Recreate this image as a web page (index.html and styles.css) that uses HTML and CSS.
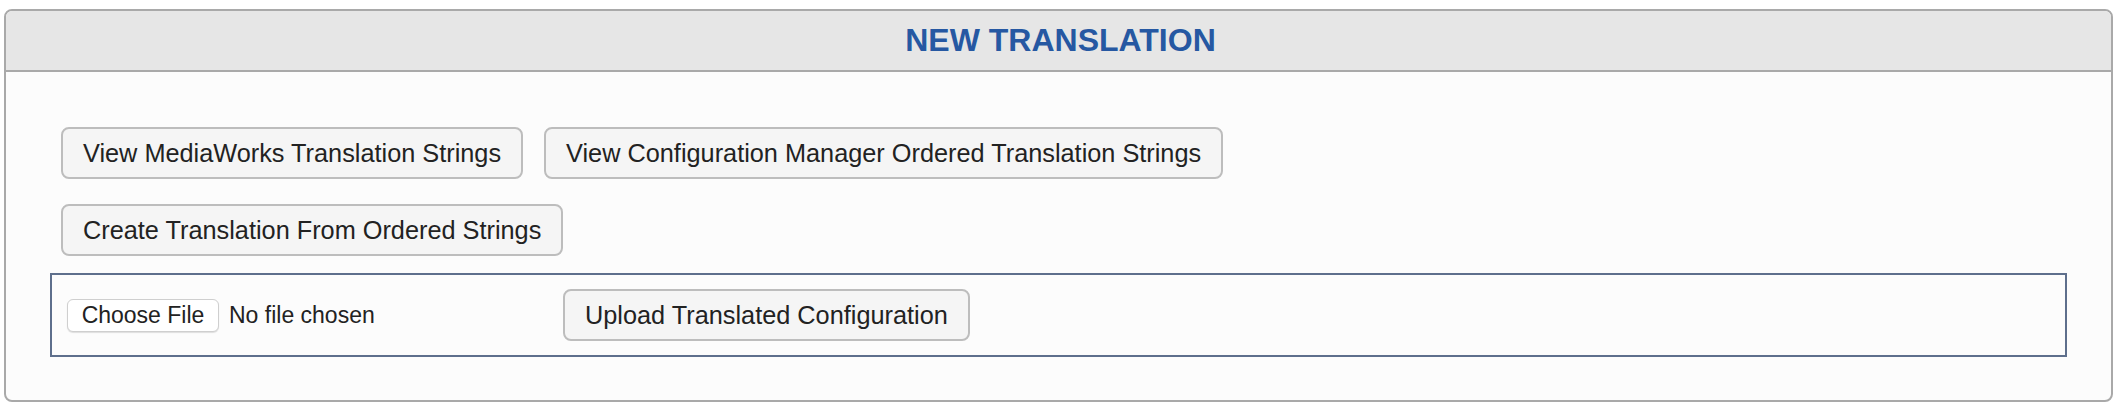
FILE: index.html
```html
<!DOCTYPE html>
<html lang="en">
<head>
<meta charset="utf-8">
<title>New Translation</title>
<link rel="stylesheet" href="styles.css">
</head>
<body>
<section class="panel">
  <header class="panel-header">
    <h1 class="panel-title">NEW TRANSLATION</h1>
  </header>
  <div class="panel-body">
    <div class="btn-row">
      <button class="btn" type="button">View MediaWorks Translation Strings</button>
      <button class="btn" type="button">View Configuration Manager Ordered Translation Strings</button>
    </div>
    <div class="btn-row">
      <button class="btn" type="button">Create Translation From Ordered Strings</button>
    </div>
    <form class="upload-frame">
      <label class="file-input">
        <span class="file-btn">Choose File</span>
        <span class="file-name">No file chosen</span>
      </label>
      <button class="btn" type="button">Upload Translated Configuration</button>
    </form>
  </div>
</section>
</body>
</html>
```

FILE: styles.css
```css
* {
  box-sizing: border-box;
}

html, body {
  margin: 0;
  padding: 0;
  background: #ffffff;
}

body {
  font-family: "Liberation Sans", Arial, sans-serif;
  color: #222222;
}

.panel {
  margin: 9px 9px 0 4px;
  border: 2px solid #a9a9a9;
  border-radius: 8px;
  background: #fcfcfc;
  overflow: hidden;
}

.panel-header {
  height: 61px;
  background: #e6e6e6;
  border-bottom: 2px solid #a9a9a9;
  display: flex;
  align-items: center;
  justify-content: center;
}

.panel-title {
  margin: 0;
  font-size: 32px;
  font-weight: bold;
  line-height: 57px;
  color: #2658a2;
  padding-left: 4px;
}

.panel-body {
  padding: 55px 44px 43px 44px;
  display: flex;
  flex-direction: column;
}

.btn-row {
  display: flex;
  gap: 21px;
  margin-left: 11px;
  margin-bottom: 25px;
}

.btn-row + .btn-row {
  margin-bottom: 17px;
}

.btn {
  height: 52px;
  padding: 0 20px;
  font-family: "Liberation Sans", Arial, sans-serif;
  font-size: 25.3px;
  line-height: 48px;
  color: #222222;
  background: #f5f5f5;
  border: 2px solid #bdbdbd;
  border-radius: 8px;
  white-space: nowrap;
}

.upload-frame {
  margin: 0;
  height: 84px;
  border: 2px solid #5e6f8c;
  padding: 0 15px;
  display: flex;
  align-items: center;
}

.file-input {
  width: 496px;
  flex: none;
  display: flex;
  align-items: center;
  gap: 10px;
}

.file-btn {
  height: 33px;
  width: 152px;
  display: inline-flex;
  align-items: center;
  justify-content: center;
  font-size: 23px;
  color: #222222;
  background: #ffffff;
  border: 1px solid #cfcfcf;
  border-radius: 6px;
  box-shadow: 0 1px 1px rgba(0, 0, 0, 0.12);
}

.file-name {
  font-size: 23px;
  color: #222222;
}
```
